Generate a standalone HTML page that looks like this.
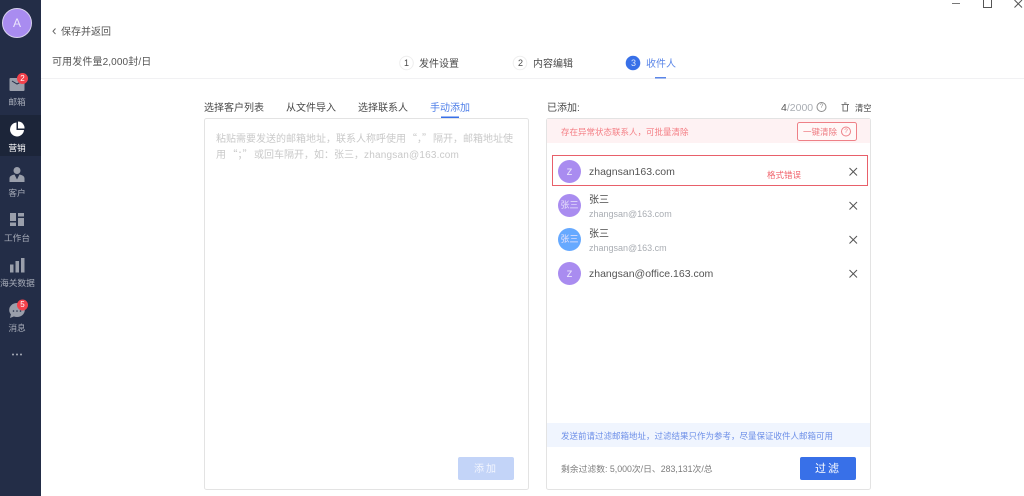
<!DOCTYPE html>
<html lang="zh"><head><meta charset="utf-8"><title>收件人</title>
<style>
html,body{margin:0;padding:0;width:1024px;height:496px;overflow:hidden;background:#fff}
body{font-family:"Liberation Sans","Noto Sans CJK SC",sans-serif;color:#4a4a4a}
#w{position:absolute;left:0;top:0;width:1024px;height:496px;filter:blur(.3px)}
.a,.t{position:absolute}
.t{white-space:nowrap;line-height:14px;font-size:10px}
.nav{left:0;width:34px;text-align:center;color:#a7acb8;font-size:8.700px}
svg{position:absolute;overflow:visible}
.av{position:absolute;left:558px;width:23px;height:23px;border-radius:50%;background:#a98cf0;color:#e8e2fb;text-align:center;line-height:23px;font-size:12px}
.g{color:#a9adb3;font-size:9px}
.m{font-size:10.500px;color:#555}
.q{font-family:"Noto Sans CJK SC",sans-serif}
</style></head><body><div id="w">
<div class="a" style="left:0;top:0;width:41px;height:496px;background:#232d47"></div>
<div class="a" style="left:0;top:115px;width:41px;height:41px;background:#1c2539"></div>
<div class="a" style="left:2px;top:8px;width:28px;height:28px;border-radius:50%;background:#a98cf0;border:1px solid #d8d2ee;color:#ece6fc;text-align:center;line-height:28px;font-size:12px">A</div>

<svg style="left:0;top:0" width="41" height="496">
<rect x="9.500" y="78" width="15" height="13" rx="1" fill="#9a9fab"/>
<path d="M12 81l5 3 4-2" fill="none" stroke="#232d47" stroke-width="1"/>
<circle cx="22.500" cy="78.500" r="5.500" fill="#f2414b"/>
<path d="M16.500 122.500a7 7 0 1 0 7.500 7.500h-7.500z" fill="#fff"/><path d="M18 121.500a6.500 6.500 0 0 1 6.500 7h-6.500z" fill="#fff"/>
<circle cx="17" cy="170.500" r="3.500" fill="#9a9fab"/>
<path d="M9.500 182v-3.500c0-2.500 2.500-3.500 5-4l2.500 5 2.500-5c2.500 .5 5 1.500 5 4v3.500z" fill="#9a9fab"/>
<path d="M10 213h6v8h-6zM10 222.500h6v3.500h-6zM18 213h6v3.500h-6zM18 218h6v8h-6z" fill="#9a9fab"/>
<path d="M10 264.500h3.500v8H10zM15.500 261h3.500v11.500h-3.500zM21 258h3.500v14.500H21z" fill="#9a9fab"/>
<ellipse cx="17" cy="310" rx="7.800" ry="7" fill="#9a9fab"/><path d="M11 314l-1 4 5-2z" fill="#9a9fab"/>
<circle cx="13.500" cy="311" r=".8" fill="#232d47"/><circle cx="17" cy="311" r=".8" fill="#232d47"/><circle cx="20.500" cy="311" r=".8" fill="#232d47"/>
<circle cx="22.500" cy="305" r="5.500" fill="#f2414b"/>
<circle cx="13" cy="354.500" r="1" fill="#a7acb8"/><circle cx="17" cy="354.500" r="1" fill="#a7acb8"/><circle cx="21" cy="354.500" r="1" fill="#a7acb8"/>
</svg>
<div class="t" style="left:17px;top:71.500px;width:11px;text-align:center;color:#fff;font-size:8px">2</div>
<div class="t" style="left:17px;top:298px;width:11px;text-align:center;color:#fff;font-size:8px">5</div>
<div class="t nav" style="top:95px">邮箱</div>
<div class="t nav" style="top:141px;color:#fff">营销</div>
<div class="t nav" style="top:186px">客户</div>
<div class="t nav" style="top:231px">工作台</div>
<div class="t nav" style="top:276px">海关数据</div>
<div class="t nav" style="top:321px">消息</div>

<svg style="left:0;top:0" width="1024" height="496">
<path d="M952 3.500h8" stroke="#777" fill="none"/>
<rect x="983.500" y="-1" width="8" height="8.500" fill="none" stroke="#555"/>
<path d="M1014.500 0l7.500 7.500M1022 0l-7.500 7.500" stroke="#555" fill="none"/>
<path d="M55.500 28.500l-2.500 2.800 2.500 2.800" stroke="#666" fill="none"/>
<rect x="41" y="78" width="983" height="1" fill="#f1f1f3"/>
<circle cx="406.500" cy="63" r="6.800" fill="#fff" stroke="#eee"/>
<circle cx="520" cy="63" r="6.800" fill="#fff" stroke="#eee"/>
<circle cx="633" cy="63" r="7.300" fill="#3870e8"/>
<rect x="655" y="77" width="11" height="1.500" fill="#5b86e8"/>
<rect x="441" y="116.500" width="18" height="1.500" fill="#3870e8"/>
<rect x="204.500" y="118.500" width="324" height="371" rx="2" fill="#fff" stroke="#e3e3e3"/>
<rect x="546.500" y="118.500" width="324" height="371" rx="2" fill="#fff" stroke="#e3e3e3"/>
<rect x="547" y="119" width="323" height="24" fill="#fef2f3"/>
<rect x="797.500" y="122.500" width="59" height="18" rx="2" fill="#fff8f8" stroke="#ee8087"/>
<circle cx="846" cy="131.500" r="4.500" fill="none" stroke="#ee8087"/>
<rect x="552.500" y="155.500" width="315" height="30" fill="#fff" stroke="#e8606a"/>
<circle cx="821.500" cy="107" r="4.500" fill="none" stroke="#8c8c8c"/>
<path d="M841.500 104.500h7.500M843 104.500v6.500h4.500v-6.500M844 103h2.500" fill="none" stroke="#777"/>
<g stroke="#555" fill="none">
<path d="M849.500 168l7.500 7.500M857 168l-7.500 7.500"/>
<path d="M849.500 202l7.500 7.500M857 202l-7.500 7.500"/>
<path d="M849.500 236l7.500 7.500M857 236l-7.500 7.500"/>
<path d="M849.500 270l7.500 7.500M857 270l-7.500 7.500"/>
</g>
<rect x="547" y="423" width="323" height="24" fill="#f0f5fe"/>
<rect x="458" y="457" width="56" height="23" rx="2" fill="#c3d4f8"/>
<rect x="800" y="457" width="56" height="23" rx="2" fill="#3870e8"/>
</svg>

<div class="t" style="left:61px;top:25.500px;color:#555">保存并返回</div>
<div class="t" style="left:52px;top:55.500px;color:#555;letter-spacing:.12px">可用发件量2,000封/日</div>

<div class="t" style="left:400px;top:56px;width:13px;text-align:center;font-size:9px">1</div>
<div class="t" style="left:419px;top:57.500px">发件设置</div>
<div class="t" style="left:514px;top:56px;width:13px;text-align:center;font-size:9px">2</div>
<div class="t" style="left:533px;top:57.500px">内容编辑</div>
<div class="t" style="left:627px;top:56px;width:13px;text-align:center;font-size:9px;color:#dbe6fb">3</div>
<div class="t" style="left:646px;top:57.500px;color:#5b86e8">收件人</div>

<div class="t" style="left:204px;top:101.500px">选择客户列表</div>
<div class="t" style="left:286px;top:101.500px">从文件导入</div>
<div class="t" style="left:358px;top:101.500px">选择联系人</div>
<div class="t" style="left:430px;top:101.500px;color:#4f7fe8">手动添加</div>

<div class="t" style="left:216px;top:130.500px;color:#c9c9c9">粘贴需要发送的邮箱地址，联系人称呼使用<span class="q" style="padding:0 1px">“，”</span>隔开，邮箱地址使</div>
<div class="t" style="left:216px;top:146.500px;color:#c9c9c9">用<span class="q" style="padding:0 1.500px">“；”</span>或回车隔开，如：张三，<span style="letter-spacing:.2px">zhangsan@163.com</span></div>
<div class="t" style="left:458px;top:462.500px;width:56px;text-align:center;color:#f2f5fe;letter-spacing:2px">添加</div>

<div class="t" style="left:547px;top:101.500px">已添加:</div>
<div class="t" style="left:781px;top:100.500px;color:#a9adb3;font-size:10.500px"><span style="color:#555">4</span>/2000</div>
<div class="t" style="left:819px;top:100px;width:5px;text-align:center;font-size:6.500px;color:#8c8c8c">?</div>
<div class="t" style="left:855px;top:101px;font-size:8.300px">清空</div>

<div class="t" style="left:561px;top:125px;color:#f47f85;font-size:8.500px">存在异常状态联系人，可批量清除</div>
<div class="t" style="left:803px;top:125px;color:#ee7b82;font-size:8.500px">一键清除</div>
<div class="t" style="left:843px;top:124.500px;width:6px;text-align:center;color:#ee7b82;font-size:6.500px">?</div>

<div class="av" style="top:160px">z</div>
<div class="t m" style="left:589px;top:164.500px">zhagnsan163.com</div>
<div class="t" style="left:767px;top:168px;color:#f0626b;font-size:8.500px">格式错误</div>

<div class="av" style="top:194px;font-size:9px">张三</div>
<div class="t" style="left:589px;top:193.500px">张三</div>
<div class="t g" style="left:589px;top:206.500px">zhangsan@163.com</div>

<div class="av" style="top:228px;background:#66a9ff;font-size:9px">张三</div>
<div class="t" style="left:589px;top:227.500px">张三</div>
<div class="t g" style="left:589px;top:240.500px">zhangsan@163.cm</div>

<div class="av" style="top:262px">z</div>
<div class="t m" style="left:589px;top:266.500px">zhangsan@office.163.com</div>

<div class="t" style="left:561px;top:429px;color:#6d8fe8;font-size:8.500px">发送前请过滤邮箱地址，过滤结果只作为参考，尽量保证收件人邮箱可用</div>
<div class="t" style="left:561px;top:461.500px;color:#7d7d7d;font-size:8.800px">剩余过滤数: 5,000次/日、283,131次/总</div>
<div class="t" style="left:800px;top:462px;width:56px;text-align:center;color:#fff;font-size:11px;letter-spacing:2px">过滤</div>
</div></body></html>
